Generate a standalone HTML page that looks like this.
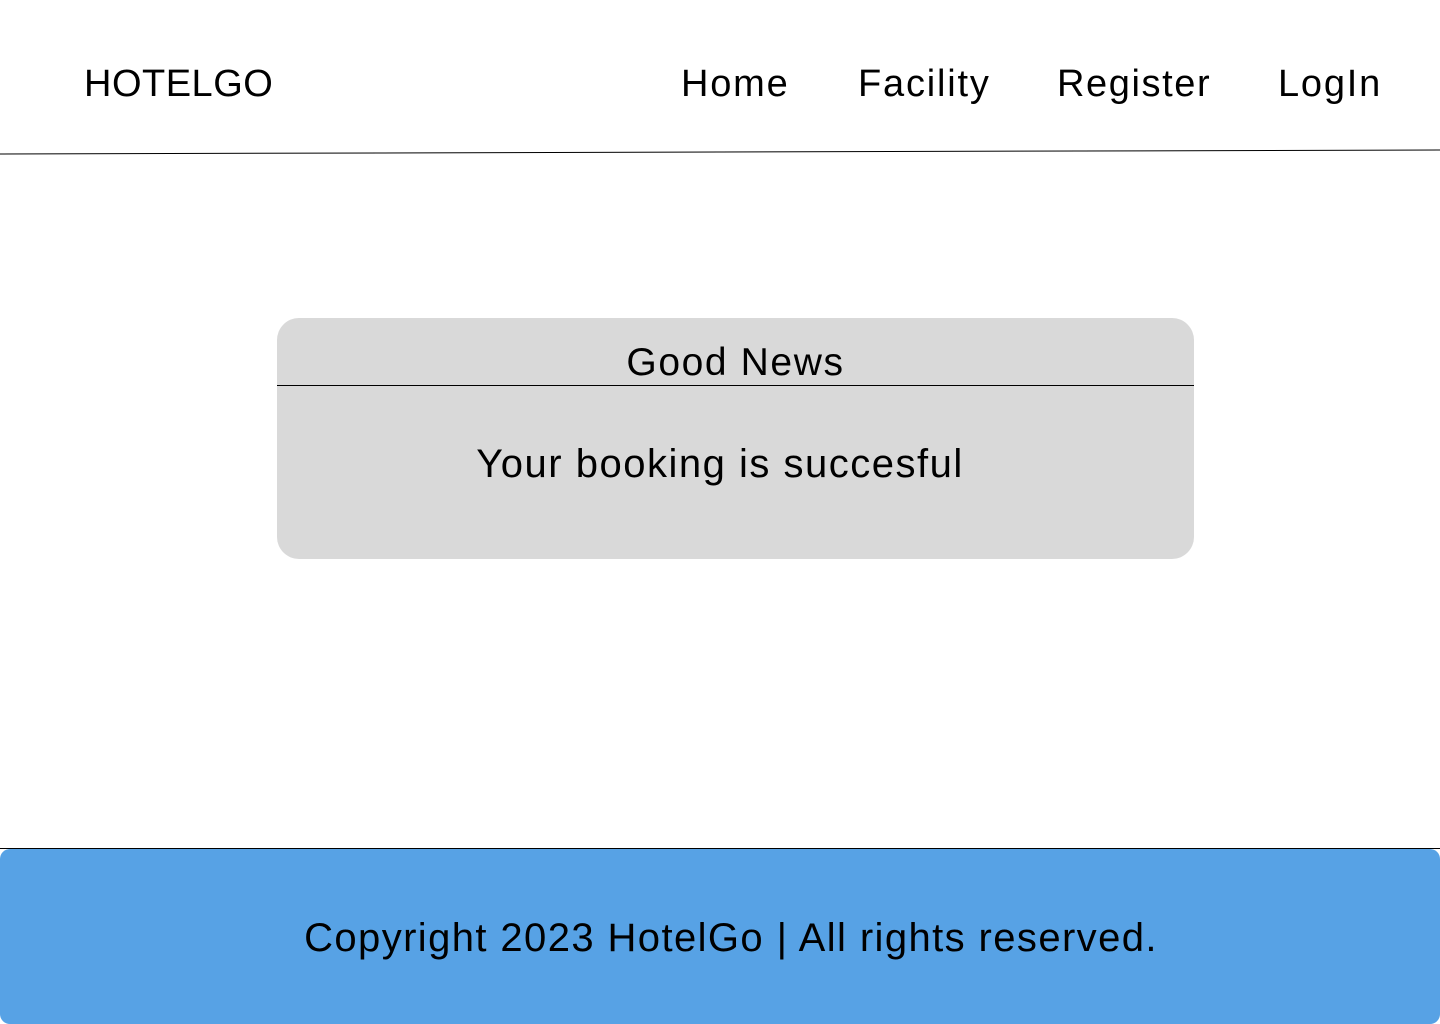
<!DOCTYPE html>
<html><head><meta charset="utf-8"><style>
body{margin:0;width:1440px;height:1024px;position:relative;background:#fff;font-family:"Liberation Sans",sans-serif;color:#000;overflow:hidden}
.t{position:absolute;font-size:38px;line-height:38px;white-space:nowrap}
.card{position:absolute;left:277px;top:318px;width:917px;height:241px;background:#d9d9d9;border-radius:22px}
.foot{position:absolute;left:0;top:849px;width:1440px;height:175px;background:#57a2e5;border-radius:10px}
</style></head><body>
<svg style="position:absolute;left:0;top:0" width="1440" height="160"><line x1="0" y1="154" x2="1440" y2="150" stroke="#000" stroke-width="1"/></svg>
<div class="t" style="left:84px;top:65px;letter-spacing:0.5px">HOTELGO</div>
<div class="t" style="left:681px;top:65px;letter-spacing:1.8px">Home</div>
<div class="t" style="left:858px;top:65px;letter-spacing:1.8px">Facility</div>
<div class="t" style="left:1057px;top:65px;letter-spacing:1.6px">Register</div>
<div class="t" style="left:1278px;top:65px;letter-spacing:1.8px">LogIn</div>
<div class="card">
<div class="t" style="left:0;width:917px;text-align:center;top:26px;font-size:39px;letter-spacing:1.6px">Good News</div>
<div style="position:absolute;left:0;top:67px;width:917px;height:1px;background:#000"></div>
<div class="t" style="left:0;width:886px;text-align:center;top:127px;font-size:40px;letter-spacing:1.5px">Your booking is succesful</div>
</div>
<div style="position:absolute;left:0;top:848px;width:1440px;height:1px;background:#000"></div>
<div class="foot">
<div class="t" style="left:0;width:1462px;text-align:center;top:70px;font-size:40px;letter-spacing:1.4px">Copyright 2023 HotelGo | All rights reserved.</div>
</div>
</body></html>
